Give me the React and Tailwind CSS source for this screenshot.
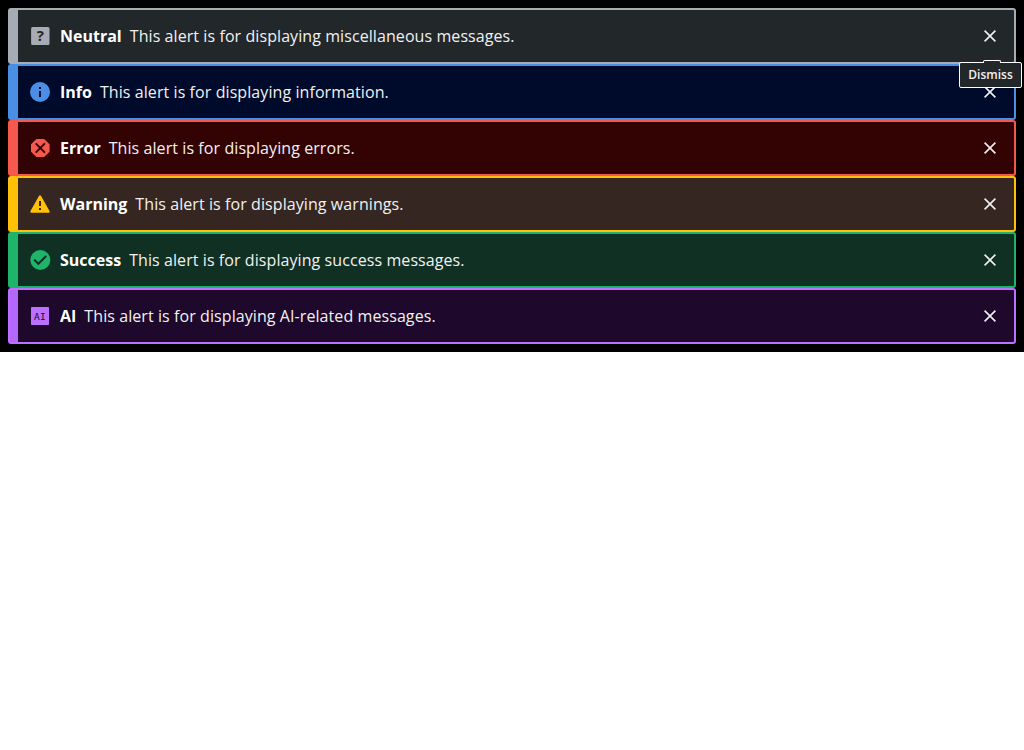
import React from "react";

const NeutralIcon = () => (
  <svg viewBox="0 0 20 20" className="size-5 shrink-0 overflow-visible text-[#a6abb4]">
    <rect x="1.1" y="1" width="18.4" height="18" rx="1.5" fill="currentColor" />
    <text x="10.4" y="15.4" textAnchor="middle" className="fill-[#22272a] font-['Open_Sans',sans-serif] text-[15px] font-bold">?</text>
  </svg>
);

const InfoIcon = () => (
  <svg viewBox="0 0 20 20" className="size-5 shrink-0 text-[#4a8fe5]">
    <circle cx="10" cy="10" r="10" fill="currentColor" />
    <path d="M9 5h2v2H9zM9 9h2v6H9z" fill="#000a2b" />
  </svg>
);

const ErrorIcon = () => (
  <svg viewBox="0 0 20 20" className="size-5 shrink-0 text-[#f4584e]">
    <path d="M6.9 1h6.8a1 1 0 0 1 .7.3L19.3 6a1 1 0 0 1 .3.7v6.6a1 1 0 0 1-.3.7l-4.9 4.7a1 1 0 0 1-.7.3H6.9a1 1 0 0 1-.7-.3L1.3 14a1 1 0 0 1-.3-.7V6.7a1 1 0 0 1 .3-.7l4.9-4.7a1 1 0 0 1 .7-.3z" fill="currentColor" />
    <path d="M5.7 5.4L14.9 14.6M14.9 5.4L5.7 14.6" stroke="#330303" strokeWidth="2" />
  </svg>
);

const WarningIcon = () => (
  <svg viewBox="0 0 20 20" className="size-5 shrink-0 text-[#ffc107]">
    <path d="M8.9 1.9a1.25 1.25 0 0 1 2.2 0L19.5 17a1.15 1.15 0 0 1-1 1.7H1.5A1.15 1.15 0 0 1 .5 17z" fill="currentColor" />
    <path d="M9 7h2v5H9zM9 14h2v2H9z" fill="#352622" />
  </svg>
);

const SuccessIcon = () => (
  <svg viewBox="0 0 20 20" className="size-5 shrink-0 overflow-visible text-[#1eb46a]">
    <circle cx="10.3" cy="10" r="10" fill="currentColor" />
    <path d="M4.2 9.6L8.4 13.8L16.2 6" fill="none" stroke="#0f3022" strokeWidth="2" />
  </svg>
);

const AiIcon = () => (
  <svg viewBox="0 0 20 20" className="size-5 shrink-0 text-[#bd70ff]">
    <rect x="1" y="1" width="18" height="18" rx="0.8" fill="currentColor" />
    <text x="10.1" y="13.7" textAnchor="middle" className="fill-[#1e082b] font-['DejaVu_Sans_Mono',monospace] text-[9.5px] tracking-[0.3px]">AI</text>
  </svg>
);

const alerts = [
  { title: "Neutral", text: "This alert is for displaying miscellaneous messages.", Icon: NeutralIcon, box: "border-[#a6abb4] bg-[#22272a]", bar: "bg-[#a6abb4]" },
  { title: "Info", text: "This alert is for displaying information.", Icon: InfoIcon, box: "border-[#4a8fe5] bg-[#000a2b]", bar: "bg-[#4a8fe5]" },
  { title: "Error", text: "This alert is for displaying errors.", Icon: ErrorIcon, box: "border-[#f4584e] bg-[#330303]", bar: "bg-[#f4584e]" },
  { title: "Warning", text: "This alert is for displaying warnings.", Icon: WarningIcon, box: "border-[#ffc107] bg-[#352622]", bar: "bg-[#ffc107]" },
  { title: "Success", text: "This alert is for displaying success messages.", Icon: SuccessIcon, box: "border-[#1eb46a] bg-[#0f3022]", bar: "bg-[#1eb46a]" },
  { title: "AI", text: "This alert is for displaying AI-related messages.", Icon: AiIcon, box: "border-[#bd70ff] bg-[#1e082b]", bar: "bg-[#b566fb]" },
];

function Tooltip() {
  return (
    <div className="absolute top-[42px] -right-4 z-10 flex h-[26px] w-[63px] items-center justify-center rounded-[2px] border border-white bg-[#22272a] text-xs font-semibold text-[#f1f1f1]">
      <span className="absolute -top-[3px] left-[23px] h-[3px] w-[18px] rounded-t-[2px] border border-b-0 border-white bg-[#22272a]" />
      Dismiss
    </div>
  );
}

function Alert({ title, text, Icon, box, bar, tooltip }) {
  return (
    <div role="alert" className={`flex h-14 items-center rounded-[3px] border-2 ${box}`}>
      <div className={`h-full w-2 shrink-0 ${bar}`} />
      <div className="flex grow items-center gap-2.5 pl-3">
        <Icon />
        <p className="flex gap-2 text-base text-[#f1f1f1]">
          <strong className="font-bold text-white">{title}</strong>
          <span className="tracking-[0.08px]">{text}</span>
        </p>
      </div>
      <div className="relative mr-2 size-8">
        <button aria-label="Dismiss" className="flex size-8 items-center justify-center text-[#f1f1f1]">
          <svg viewBox="0 0 20 20" className="size-5">
            <path d="M4.6 4.6L15.4 15.4M15.4 4.6L4.6 15.4" stroke="currentColor" strokeWidth="1.6" />
          </svg>
        </button>
        {tooltip && <Tooltip />}
      </div>
    </div>
  );
}

export default function App() {
  return (
    <main className="bg-black p-2 font-['Open_Sans',sans-serif]">
      {alerts.map((a, i) => (
        <Alert key={a.title} {...a} tooltip={i === 0} />
      ))}
    </main>
  );
}
